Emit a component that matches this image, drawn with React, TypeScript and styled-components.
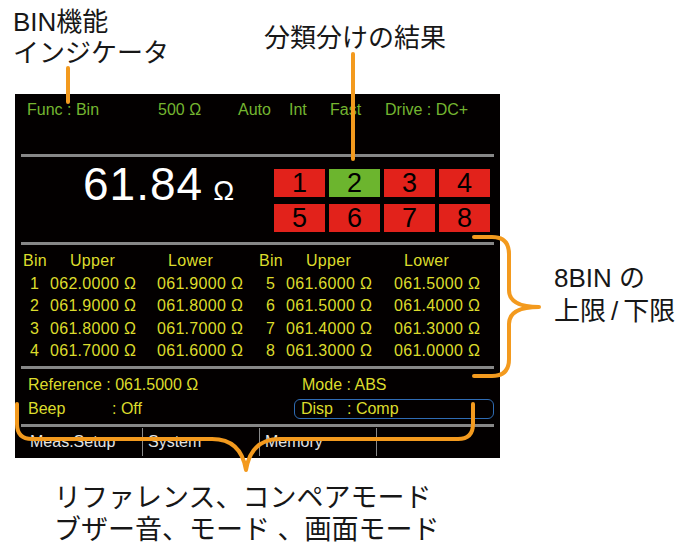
import React from "react";
import styled, { createGlobalStyle } from "styled-components";

const GlobalStyle = createGlobalStyle`
  html, body { margin: 0; padding: 0; background: #ffffff; }
  body { font-family: "Liberation Sans", "Noto Sans CJK JP", sans-serif; }
`;

const Page = styled.div`
  position: relative;
  width: 677px;
  height: 545px;
  overflow: hidden;
  background: #ffffff;
  color: #171717;
`;

const TopArea = styled.div`
  display: flex;
  height: 94px;
`;

const Caption = styled.div<{ $size: number; $lh: number }>`
  font-family: "Liberation Sans", "Noto Sans CJK JP", sans-serif;
  font-size: ${(p) => p.$size}px;
  line-height: ${(p) => p.$lh}px;
  white-space: nowrap;
  color: #171717;
`;

const IndicatorCaption = styled(Caption)`
  flex: 0 0 264px;
  box-sizing: border-box;
  padding: 7px 0 0 13px;
`;

const ResultCaption = styled(Caption)`
  padding-top: 23px;
`;

const MiddleArea = styled.div`
  display: flex;
  height: 364px;
`;

const LimitCaption = styled(Caption)`
  margin-left: 54px;
  padding-top: 168px;
`;

const Slash = styled.span`
  margin: 0 5px;
`;

const BottomCaption = styled(Caption)`
  margin-top: 24px;
  padding-left: 54px;
`;

const Screen = styled.div`
  flex: 0 0 485px;
  height: 364px;
  margin-left: 15px;
  background: #030000;
  display: flex;
  flex-direction: column;
  font-family: "Liberation Sans", Arial, sans-serif;
  font-size: 16px;
  white-space: nowrap;
`;

const StatusBar = styled.div`
  height: 60px;
  box-sizing: border-box;
  padding: 6px 0 0 12px;
  display: grid;
  grid-template-columns: 131px 80px 51px 41px 55px auto;
  align-content: start;
  line-height: 20px;
  color: #74b530;
`;

const Rule = styled.div`
  flex: none;
  height: 3px;
  margin: 0 6px;
  background: #878787;
`;

const MeasureSection = styled.div`
  height: 85px;
  display: flex;
`;

const Reading = styled.div`
  flex: 0 0 259px;
  box-sizing: border-box;
  padding: 4px 0 0 68px;
  display: flex;
  align-items: baseline;
  align-self: flex-start;
  color: #ffffff;
  line-height: 46px;
`;

const ReadingValue = styled.span`
  font-size: 46px;
  letter-spacing: 1px;
`;

const ReadingUnit = styled.span`
  font-size: 28px;
  margin-left: 10px;
`;

const BinGrid = styled.div`
  margin-top: 12px;
  display: grid;
  grid-template-columns: repeat(4, 51px);
  grid-auto-rows: 28px;
  column-gap: 4px;
  row-gap: 7px;
  align-content: start;
`;

const BinCell = styled.div<{ $pass: boolean }>`
  background: ${(p) => (p.$pass ? "#6cb52e" : "#e2221b")};
  color: #000000;
  font-size: 27px;
  line-height: 28px;
  text-align: center;
`;

const LimitTable = styled.div`
  height: 121px;
  box-sizing: border-box;
  padding: 5px 0 0 8px;
  display: grid;
  grid-template-columns: 27px 107px 102px 27px 108px auto;
  grid-auto-rows: 22.5px;
  align-items: center;
  align-content: start;
  color: #dcdc2c;
  letter-spacing: 0.3px;
`;

const HeadCell = styled.div<{ $indent?: number }>`
  padding-left: ${(p) => p.$indent ?? 0}px;
`;

const IndexCell = styled.div`
  padding-left: 7px;
`;

const ValueCell = styled.div``;

const InfoPanel = styled.div`
  height: 55px;
  box-sizing: border-box;
  padding: 4px 0 0 13px;
  display: grid;
  grid-template-columns: 266px 200px;
  grid-auto-rows: 24px;
  align-items: center;
  align-content: start;
  color: #dcdc2c;
`;

const InfoText = styled.div<{ $indent?: number }>`
  padding-left: ${(p) => p.$indent ?? 0}px;
`;

const FieldName = styled.span<{ $width: number }>`
  display: inline-block;
  width: ${(p) => p.$width}px;
`;

const Highlight = styled.div`
  height: 20px;
  box-sizing: border-box;
  border: 1.5px solid #2f6cb4;
  border-radius: 6px;
  padding-left: 6px;
  display: flex;
  align-items: center;
`;

const SoftKeyBar = styled.div`
  height: 31px;
  display: flex;
  align-items: flex-start;
`;

const SoftKey = styled.div<{ $first?: boolean }>`
  margin-top: 1px;
  height: 28px;
  line-height: 28px;
  width: ${(p) => (p.$first ? 127 : 117)}px;
  box-sizing: border-box;
  padding-left: ${(p) => (p.$first ? 15 : 5)}px;
  border-left: ${(p) => (p.$first ? "none" : "1px solid #8a8a8a")};
  color: #e4e4e4;
`;

const Callouts = styled.svg`
  position: absolute;
  left: 0;
  top: 0;
  width: 677px;
  height: 545px;
  pointer-events: none;
`;

const rows = [
  ["1", "062.0000 Ω", "061.9000 Ω", "5", "061.6000 Ω", "061.5000 Ω"],
  ["2", "061.9000 Ω", "061.8000 Ω", "6", "061.5000 Ω", "061.4000 Ω"],
  ["3", "061.8000 Ω", "061.7000 Ω", "7", "061.4000 Ω", "061.3000 Ω"],
  ["4", "061.7000 Ω", "061.6000 Ω", "8", "061.3000 Ω", "061.0000 Ω"],
];

const bins = [1, 2, 3, 4, 5, 6, 7, 8];
const passBin = 2;

export default function App() {
  return (
    <>
      <GlobalStyle />
      <Page>
        <TopArea>
          <IndicatorCaption $size={26} $lh={31}>
            BIN機能
            <br />
            インジケータ
          </IndicatorCaption>
          <ResultCaption $size={26} $lh={31}>
            分類分けの結果
          </ResultCaption>
        </TopArea>

        <MiddleArea>
          <Screen>
            <StatusBar>
              <span>Func : Bin</span>
              <span>500 Ω</span>
              <span>Auto</span>
              <span>Int</span>
              <span>Fast</span>
              <span>Drive : DC+</span>
            </StatusBar>
            <Rule />
            <MeasureSection>
              <Reading>
                <ReadingValue>61.84</ReadingValue>
                <ReadingUnit>Ω</ReadingUnit>
              </Reading>
              <BinGrid>
                {bins.map((b) => (
                  <BinCell key={b} $pass={b === passBin}>
                    {b}
                  </BinCell>
                ))}
              </BinGrid>
            </MeasureSection>
            <Rule />
            <LimitTable>
              <HeadCell>Bin</HeadCell>
              <HeadCell $indent={20}>Upper</HeadCell>
              <HeadCell $indent={11}>Lower</HeadCell>
              <HeadCell>Bin</HeadCell>
              <HeadCell $indent={20}>Upper</HeadCell>
              <HeadCell $indent={10}>Lower</HeadCell>
              {rows.map((r) => (
                <React.Fragment key={r[0]}>
                  <IndexCell>{r[0]}</IndexCell>
                  <ValueCell>{r[1]}</ValueCell>
                  <ValueCell>{r[2]}</ValueCell>
                  <IndexCell>{r[3]}</IndexCell>
                  <ValueCell>{r[4]}</ValueCell>
                  <ValueCell>{r[5]}</ValueCell>
                </React.Fragment>
              ))}
            </LimitTable>
            <Rule />
            <InfoPanel>
              <InfoText>Reference : 061.5000 Ω</InfoText>
              <InfoText $indent={8}>Mode : ABS</InfoText>
              <InfoText>
                <FieldName $width={84}>Beep</FieldName>: Off
              </InfoText>
              <Highlight>
                <FieldName $width={46}>Disp</FieldName>: Comp
              </Highlight>
            </InfoPanel>
            <Rule />
            <SoftKeyBar>
              <SoftKey $first>Meas.Setup</SoftKey>
              <SoftKey>System</SoftKey>
              <SoftKey>Memory</SoftKey>
              <SoftKey />
            </SoftKeyBar>
          </Screen>
          <LimitCaption $size={26} $lh={33}>
            8BIN の
            <br />
            上限<Slash>/</Slash>下限
          </LimitCaption>
        </MiddleArea>

        <BottomCaption $size={27} $lh={32}>
          リファレンス、コンペアモード
          <br />
          ブザー音、モード 、画面モード
        </BottomCaption>

        <Callouts viewBox="0 0 677 545">
          <g fill="none" stroke="#f39a1e" strokeWidth={4} strokeLinecap="round" strokeLinejoin="round">
            <path d="M68,68 V102" />
            <path d="M353,54 V159" />
            <path d="M474,237 H492 Q509,237 509,254 V290 Q509,307 539,307 Q509,307 509,324 V359 Q509,376 492,376 H474" />
            <path d="M17,404 V424 Q17,439 32,439 H212 Q241,439 246,470 Q251,439 280,439 H458 Q473,439 473,424 V404" />
          </g>
        </Callouts>
      </Page>
    </>
  );
}
